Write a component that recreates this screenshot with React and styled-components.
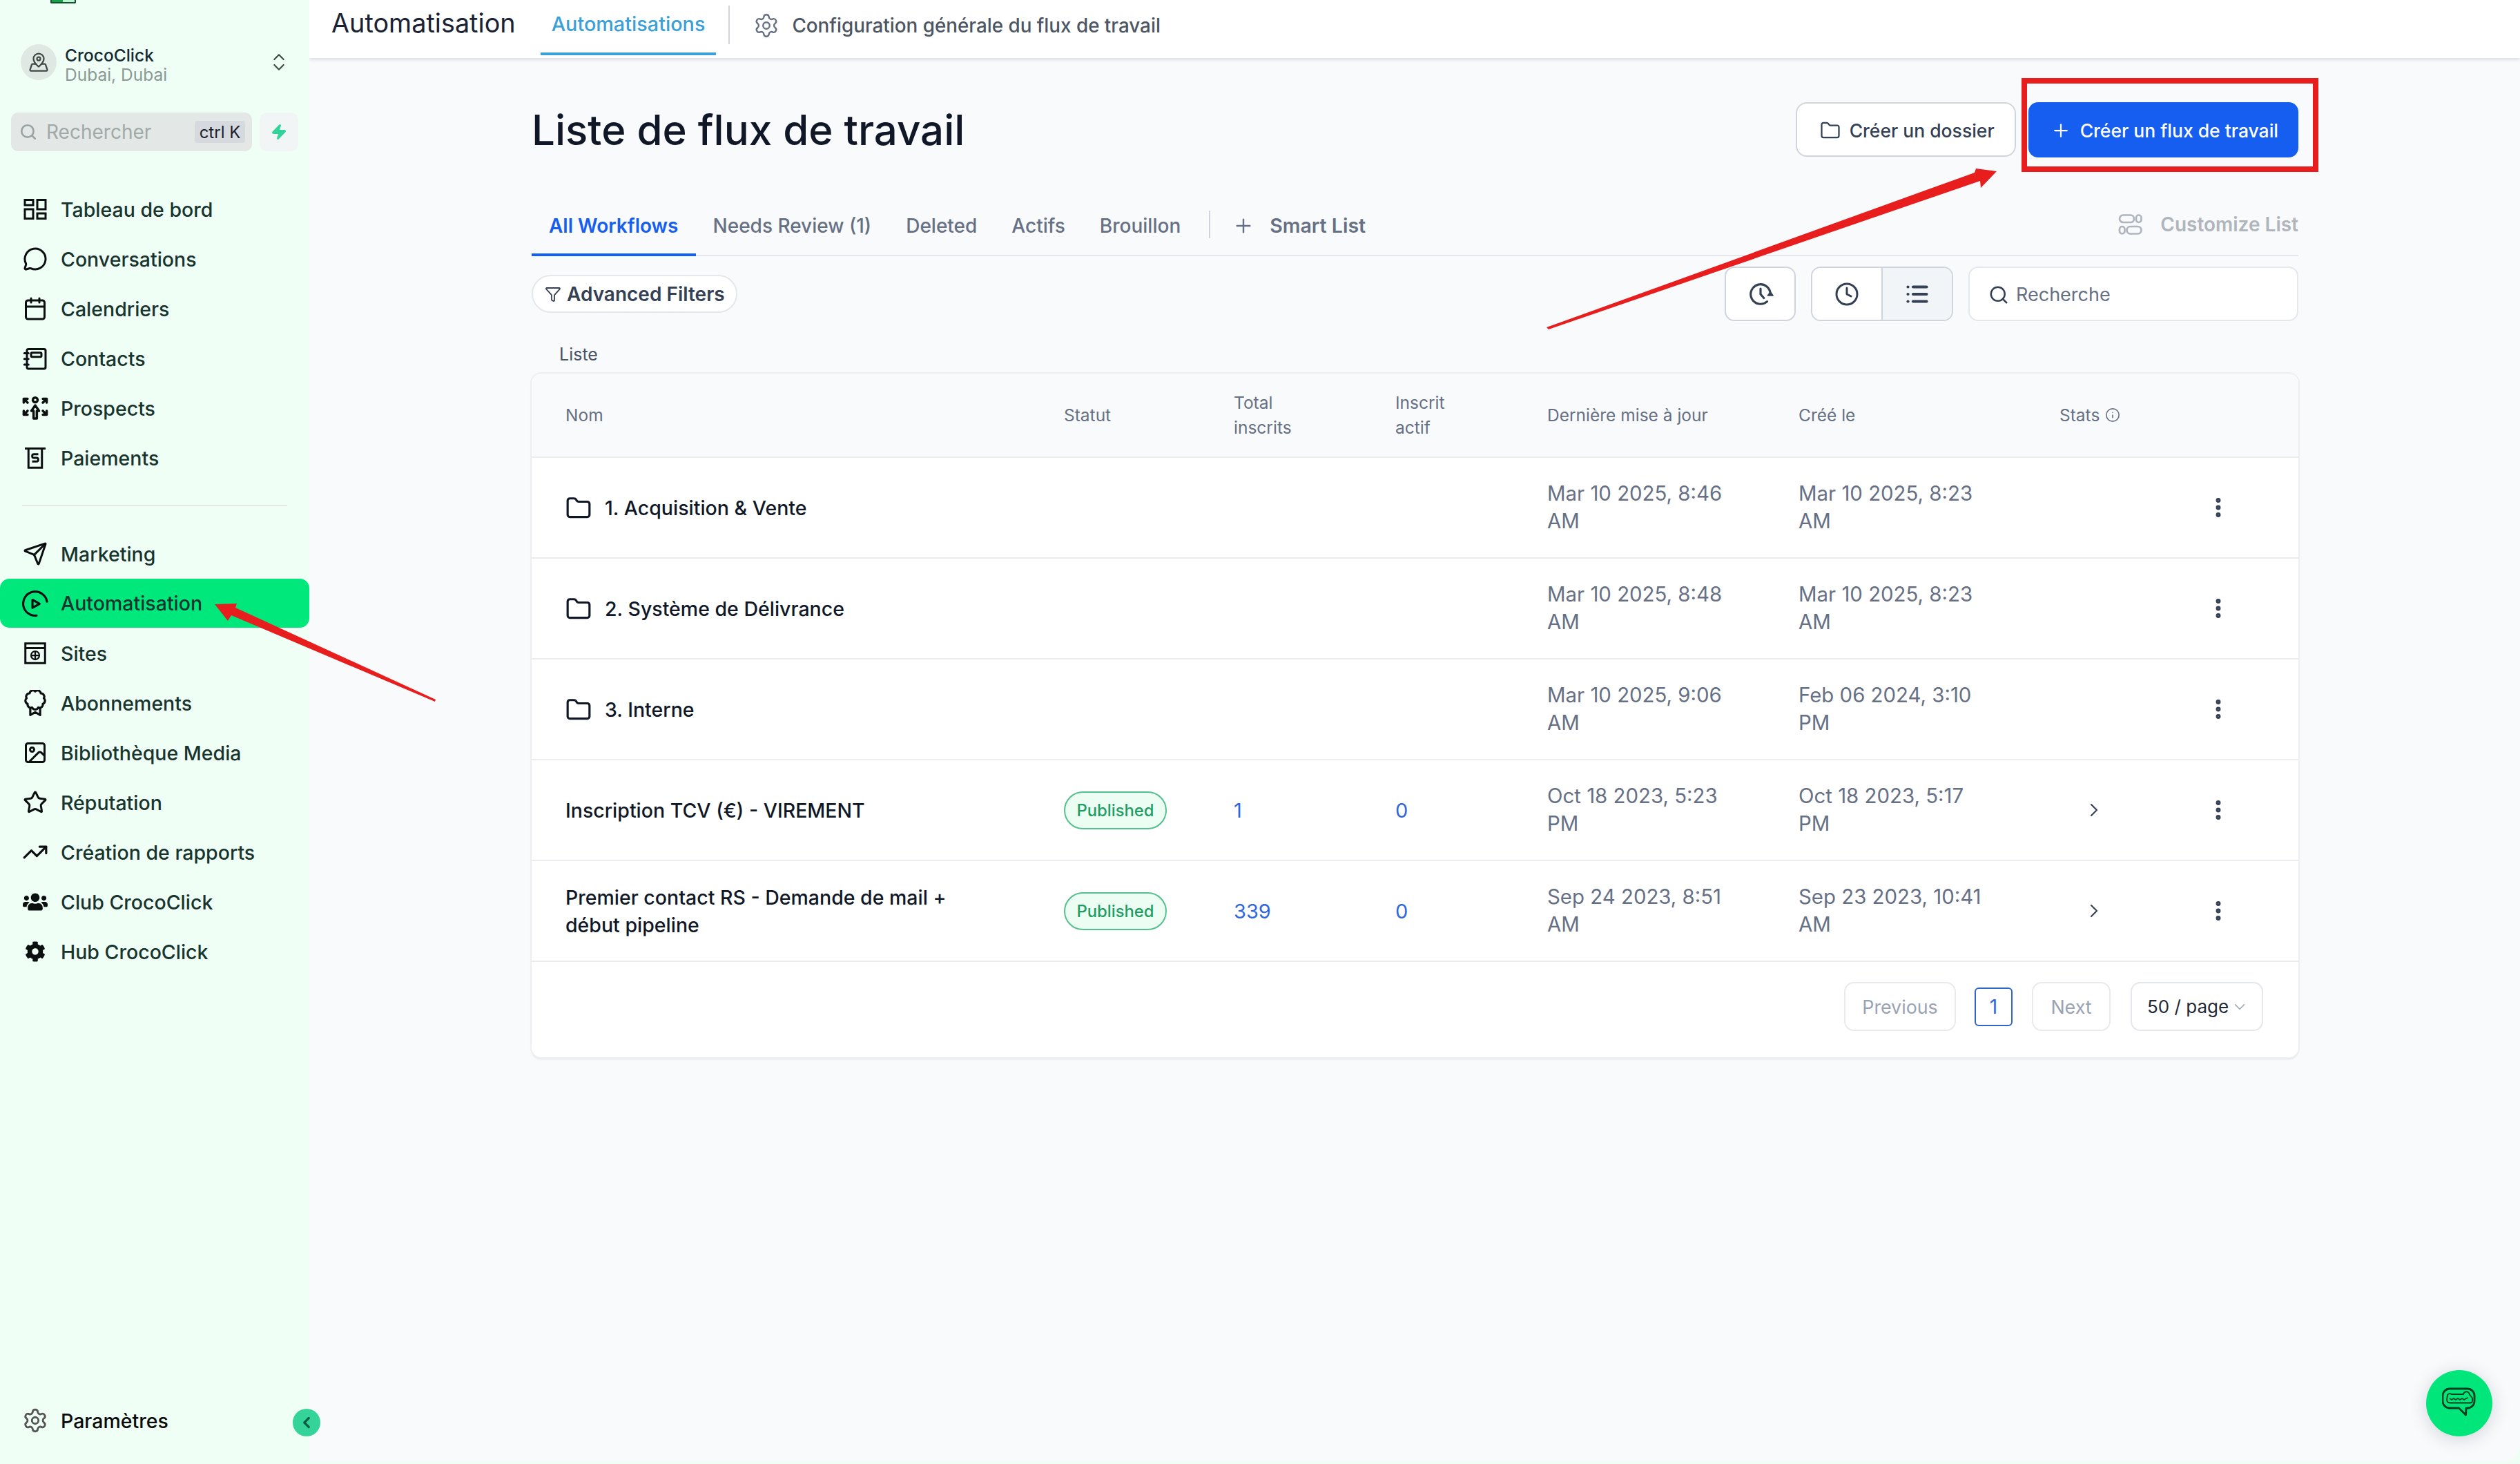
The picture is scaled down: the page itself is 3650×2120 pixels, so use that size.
import React from "react";
import styled, { createGlobalStyle } from "styled-components";
import {
  Calendar,
  ChevronDown,
  ChevronLeft,
  ChevronRight,
  ChevronsUpDown,
  Clock,
  EllipsisVertical,
  Filter,
  Folder,
  Image,
  Info,
  List,
  MapPinned,
  MessageCircle,
  Plus,
  Search,
  Send,
  Settings,
  Star,
  TrendingUp,
  Zap,
} from "lucide-react";
import { FaCog, FaUsers } from "react-icons/fa";

const GlobalStyle = createGlobalStyle`
  html, body {
    margin: 0;
    padding: 0;
    background: #f0fff6;
    font-family: Inter, "Liberation Sans", sans-serif;
  }
  * {
    box-sizing: border-box;
  }
`;

const Shell = styled.div`
  position: relative;
  display: flex;
  width: 3650px;
  height: 2120px;
  overflow: hidden;
  background: #f0fff6;
`;

const Sidebar = styled.aside`
  position: relative;
  display: flex;
  flex-direction: column;
  width: 448px;
  flex-shrink: 0;
  height: 2117px;
  background: #f0fff6;
  border-bottom-left-radius: 20px;
`;

const LogoSliver = styled.div`
  display: flex;
  width: 37px;
  height: 5px;
  margin-left: 73px;
  border: 2px solid #14532d;
  border-top: 0;
  border-radius: 0 0 2px 2px;
  background: linear-gradient(90deg, #16a34a 50%, #bbf7d0 50%);
`;

const Location = styled.div`
  display: flex;
  align-items: center;
  height: 52px;
  margin: 59px 28px 0 30px;
`;

const Avatar = styled.div`
  display: flex;
  align-items: center;
  justify-content: center;
  width: 52px;
  height: 52px;
  border-radius: 50%;
  background: #dfe8e3;
  color: #3f4a47;
`;

const LocationText = styled.div`
  flex: 1;
  margin: 8px 0 0 12px;
  font-size: 24.5px;
  line-height: 28px;
`;

const LocationName = styled.div`
  color: #142a33;
  font-weight: 500;
`;

const LocationSub = styled.div`
  color: #8b9895;
`;

const SearchRow = styled.div`
  display: flex;
  gap: 11px;
  margin: 47px 16px 0;
`;

const SideSearch = styled.div`
  display: flex;
  align-items: center;
  width: 349px;
  height: 56px;
  padding: 0 10px 0 12px;
  border-radius: 10px;
  background: #e3e7e6;
  color: #a1aaa9;
  font-size: 28px;
`;

const SideSearchLabel = styled.span`
  flex: 1;
  margin-left: 13px;
`;

const Kbd = styled.span`
  display: flex;
  align-items: center;
  justify-content: center;
  width: 73px;
  height: 32px;
  border-radius: 4px;
  background: #d6dadf;
  color: #1a1f2b;
  font-size: 24px;
`;

const BoltButton = styled.div`
  display: flex;
  align-items: center;
  justify-content: center;
  width: 56px;
  height: 56px;
  border-radius: 10px;
  background: #f1f5f6;
  color: #34d399;
`;

const Nav = styled.nav`
  display: flex;
  flex-direction: column;
  margin-top: ${(p) => p.$top}px;
`;

const NavItem = styled.div`
  display: flex;
  align-items: center;
  height: ${(p) => (p.$active ? "71px" : "72px")};
  margin-bottom: ${(p) => (p.$active ? "1px" : "0")};
  padding-left: 32px;
  border-radius: 14px;
  background: ${(p) => (p.$active ? "#00e87c" : "transparent")};
  color: #17342e;
  font-size: 28.5px;
  font-weight: 500;
`;

const NavIcon = styled.span`
  display: flex;
  align-items: center;
  justify-content: center;
  width: 38px;
  height: 38px;
  margin-right: 18px;
  color: #0b0f10;
`;

const NavDivider = styled.div`
  height: 2px;
  margin: 32px 32px 0;
  background: #e4e9e8;
`;

const SettingsRow = styled.div`
  display: flex;
  align-items: center;
  height: 60px;
  margin-top: auto;
  margin-bottom: 30px;
  padding-left: 32px;
  color: #0a0c0c;
  font-size: 28.5px;
  font-weight: 500;
`;

const SettingsIcon = styled.span`
  display: flex;
  width: 38px;
  margin-right: 18px;
  color: #555;
`;

const CollapseButton = styled.div`
  position: absolute;
  left: 424px;
  bottom: 37px;
  display: flex;
  align-items: center;
  justify-content: center;
  width: 40px;
  height: 40px;
  border-radius: 50%;
  background: #34d399;
  color: #065f46;
`;

const Main = styled.main`
  display: flex;
  flex: 1;
  flex-direction: column;
  height: 2116px;
  background: #f8fafc;
  border-bottom-right-radius: 24px;
`;

const Header = styled.header`
  display: flex;
  align-items: flex-start;
  height: 84px;
  padding-left: 32px;
  background: #fff;
  box-shadow: 0 2px 6px rgba(16, 24, 40, 0.14);
`;

const AppTitle = styled.div`
  margin-top: 11px;
  color: #1a2233;
  font-size: 37.8px;
  line-height: 44px;
`;

const HeaderTab = styled.div`
  height: 80px;
  margin-left: 36px;
  padding: 13px 16px 0;
  border-bottom: 4px solid #3b9fd8;
  color: #3b9fd8;
  font-size: 28.8px;
  font-weight: 500;
  line-height: 44px;
`;

const HeaderDivider = styled.div`
  width: 2px;
  height: 56px;
  margin: 8px 34px 0 18px;
  background: #cfd4da;
`;

const HeaderLink = styled.div`
  display: flex;
  align-items: center;
  gap: 18px;
  height: 74px;
  color: #4b5563;
  font-size: 27.8px;
  font-weight: 500;
`;

const Content = styled.div`
  display: flex;
  flex-direction: column;
  padding: 64px 321px 0 322px;
`;

const TitleRow = styled.div`
  display: flex;
  align-items: center;
  justify-content: space-between;
  height: 80px;
`;

const Title = styled.h1`
  margin: 0;
  color: #101828;
  font-size: 60px;
  font-weight: 500;
`;

const TitleActions = styled.div`
  display: flex;
  gap: 18px;
`;

const OutlineButton = styled.div`
  display: flex;
  align-items: center;
  gap: 13px;
  height: 79px;
  padding: 2px 29px 0 33px;
  border: 2px solid #d0d5dd;
  border-radius: 16px;
  background: #fff;
  color: #344054;
  font-size: 26.5px;
  font-weight: 500;
`;

const PrimaryButton = styled.div`
  display: flex;
  align-items: center;
  gap: 13px;
  height: 80px;
  padding: 2px 29px 0 32px;
  border-radius: 14px;
  background: #155eef;
  color: #fff;
  font-size: 26.5px;
  font-weight: 500;
`;

const TabsBar = styled.div`
  display: flex;
  align-items: stretch;
  height: 81px;
  margin-top: 62px;
  border-bottom: 2px solid #e4e7ec;
`;

const Tab = styled.div`
  display: flex;
  align-items: center;
  padding: 0 25px 4px;
  margin-bottom: -2px;
  border-bottom: 4px solid ${(p) => (p.$active ? "#155eef" : "transparent")};
  color: ${(p) => (p.$active ? "#155eef" : "#667085")};
  font-size: 28px;
  font-weight: ${(p) => (p.$active ? 600 : 500)};
`;

const TabDivider = styled.div`
  width: 2px;
  height: 40px;
  margin: 15px 32px 0 16px;
  background: #d0d5dd;
`;

const SmartList = styled.div`
  display: flex;
  align-items: center;
  gap: 22px;
  height: 73px;
  color: #667085;
  font-size: 28.5px;
  font-weight: 600;
`;

const CustomizeList = styled.div`
  display: flex;
  align-items: center;
  gap: 26px;
  height: 70px;
  margin-left: auto;
  color: #b0b5bd;
  font-size: 28px;
  font-weight: 600;
`;

const Toolbar = styled.div`
  display: flex;
  align-items: center;
  height: 79px;
  margin-top: 15px;
`;

const FilterPill = styled.div`
  display: flex;
  align-items: center;
  gap: 8px;
  height: 55px;
  padding: 0 16px 0 17px;
  border: 2px solid #e4e7ec;
  border-radius: 28px;
  background: #fff;
  color: #344054;
  font-size: 28px;
  font-weight: 600;
`;

const IconButton = styled.div`
  display: flex;
  align-items: center;
  justify-content: center;
  width: 103px;
  height: 79px;
  margin-left: auto;
  border: 2px solid #d0d5dd;
  border-radius: 14px;
  background: #fff;
  color: #344054;
`;

const Segmented = styled.div`
  display: flex;
  width: 206px;
  height: 79px;
  margin-left: 22px;
  overflow: hidden;
  border: 2px solid #d0d5dd;
  border-radius: 14px;
  background: #fff;
  color: #344054;
`;

const Segment = styled.div`
  display: flex;
  flex: 1;
  align-items: center;
  justify-content: center;
  background: ${(p) => (p.$on ? "#f2f5f8" : "#fff")};
  border-left: ${(p) => (p.$on ? "2px solid #d0d5dd" : "0")};
`;

const TableSearch = styled.div`
  display: flex;
  align-items: center;
  gap: 10px;
  width: 478px;
  height: 79px;
  margin-left: 22px;
  padding: 2px 0 0 27px;
  border: 2px solid #e4e7ec;
  border-radius: 14px;
  background: #fff;
  color: #667085;
  font-size: 27px;
`;

const ListLabel = styled.div`
  margin: 30px 0 10px 40px;
  color: #475467;
  font-size: 25px;
  line-height: 36px;
`;

const Card = styled.div`
  display: flex;
  flex-direction: column;
  height: 990px;
  border-radius: 14px;
  background: #fff;
  box-shadow: 0 0 0 2px #eceef1, 0 3px 3px rgba(16, 24, 40, 0.1);
`;

const Row = styled.div`
  display: grid;
  grid-template-columns: 771px 246px 234px 220px 364px 378px 212px 1fr;
  align-items: center;
  height: ${(p) => (p.$head ? "122px" : "146px")};
  border-bottom: 2px solid #eaecf0;
  background: ${(p) => (p.$head ? "#f8fafc" : "#fff")};
  border-radius: ${(p) => (p.$head ? "14px 14px 0 0" : "0")};
`;

const HeadCell = styled.div`
  padding-left: ${(p) => (p.$first ? "49px" : "0")};
  color: #667085;
  font-size: 24.5px;
  line-height: 36px;
`;

const StatsHead = styled(HeadCell)`
  display: flex;
  align-items: center;
  gap: 8px;
`;

const NameCell = styled.div`
  display: flex;
  align-items: center;
  gap: 19px;
  padding: 2px 0 0 49px;
  max-width: 620px;
  color: #101828;
  font-size: 28.5px;
  font-weight: 500;
  line-height: 40px;
`;

const Badge = styled.span`
  display: inline-flex;
  align-items: center;
  justify-content: center;
  width: 149px;
  height: 55px;
  border: 2px solid #55c08d;
  border-radius: 28px;
  background: #ecfdf3;
  color: #1f9d62;
  font-size: 23.8px;
  font-weight: 500;
`;

const CountCell = styled.div`
  color: #2f66dd;
  font-size: 29px;
`;

const DateCell = styled.div`
  max-width: 290px;
  color: #667085;
  font-size: 29.4px;
  line-height: 40px;
`;

const StatsCell = styled.div`
  display: flex;
  padding-left: 34px;
  color: #344054;
`;

const MenuCell = styled.div`
  display: flex;
  color: #344054;
`;

const Pagination = styled.div`
  display: flex;
  align-items: flex-start;
  justify-content: flex-end;
  padding: 29px 51px 0 0;
`;

const PageButton = styled.div`
  display: flex;
  align-items: center;
  justify-content: center;
  width: ${(p) => p.$w}px;
  height: 71px;
  margin-right: ${(p) => p.$gap}px;
  border: 2px solid #e8eaee;
  border-radius: 14px;
  background: #fff;
  color: #98a2b3;
  font-size: 26.8px;
`;

const PageCurrent = styled.div`
  display: flex;
  align-items: center;
  justify-content: center;
  width: 55px;
  height: 56px;
  margin: 8px 28px 0 0;
  border: 2px solid #2f66c9;
  border-radius: 6px;
  color: #2f66dd;
  font-size: 28px;
`;

const PageSize = styled.div`
  display: flex;
  align-items: center;
  gap: 3px;
  width: 192px;
  height: 71px;
  padding-left: 22px;
  border: 2px solid #e4e7ec;
  border-radius: 14px;
  background: #fff;
  color: #1f2937;
  font-size: 26px;
`;

const ChatBubble = styled.div`
  position: absolute;
  left: 3514px;
  top: 1984px;
  display: flex;
  align-items: center;
  justify-content: center;
  width: 96px;
  height: 96px;
  border-radius: 50%;
  background: #00e67a;
  box-shadow: 0 4px 26px rgba(16, 24, 40, 0.16);
`;

const Annotations = styled.svg`
  position: absolute;
  left: 0;
  top: 0;
  pointer-events: none;
`;

const SvgIcon = ({ size = 36, children, ...rest }) => (
  <svg
    width={size}
    height={size}
    viewBox="0 0 24 24"
    fill="none"
    stroke="currentColor"
    strokeWidth="2"
    strokeLinecap="round"
    strokeLinejoin="round"
    {...rest}
  >
    {children}
  </svg>
);

const DashboardIcon = () => (
  <SvgIcon strokeLinecap="butt" strokeLinejoin="miter">
    <rect x="2" y="3" width="8" height="5" />
    <rect x="14" y="3" width="8" height="9" />
    <rect x="2" y="12" width="8" height="9" />
    <rect x="14" y="16" width="8" height="5" />
  </SvgIcon>
);

const ContactsIcon = () => (
  <SvgIcon>
    <rect x="4" y="3" width="18" height="19" rx="1.5" />
    <rect x="8" y="6.5" width="10" height="4" rx="1" />
    <path d="M1.5 7h4M1.5 12.5h4M1.5 18h4" />
  </SvgIcon>
);

const ProspectsIcon = () => (
  <SvgIcon size={38} strokeWidth="2.2">
    <circle cx="12" cy="4.5" r="2.2" />
    <path d="M8.5 14.5l3.5-5 3.5 5h-2v7h-3v-7z" />
    <path d="M1.5 7V3.5H5M1.5 3.5l3.5 3.5M22.5 7V3.5H19M22.5 3.5L19 7M1.5 14.5V18H5M1.5 18L5 14.5M22.5 14.5V18H19M22.5 18L19 14.5" />
  </SvgIcon>
);

const PaymentsIcon = () => (
  <SvgIcon strokeLinecap="butt" strokeLinejoin="miter">
    <path d="M2 3h20M5.5 3v18.5h13V3" />
    <path
      d="M15 8.5h-4.2a1.7 1.7 0 0 0 0 3.5h2.4a1.7 1.7 0 0 1 0 3.5H9"
      strokeWidth="1.9"
    />
  </SvgIcon>
);

const AutomationIcon = () => (
  <SvgIcon size={38}>
    <path d="M22.8 10.2A11 11 0 1 0 13.2 23" />
    <path d="M9.5 8.5l6.5 3.7-6.5 3.7z" />
  </SvgIcon>
);

const SitesIcon = () => (
  <SvgIcon strokeLinecap="butt" strokeLinejoin="miter">
    <rect x="2.5" y="2.5" width="19" height="19" />
    <path d="M2.5 7h19" />
    <circle cx="12" cy="14" r="4" strokeWidth="1.5" />
    <path d="M8 14h8M12 10v8" strokeWidth="1.5" />
  </SvgIcon>
);

// scalloped outline of the subscription rosette, one arc per lobe
const rosette = (() => {
  const lobes = 9;
  const pts = Array.from({ length: lobes }, (_, i) => {
    const a = (i / lobes) * Math.PI * 2 - Math.PI / 2;
    return [12 + 8 * Math.cos(a), 9 + 7.6 * Math.sin(a)];
  });
  const [first] = pts;
  const arcs = pts
    .slice(1)
    .concat([first])
    .map(([x, y]) => `A3 3 0 0 1 ${x.toFixed(2)} ${y.toFixed(2)}`)
    .join(" ");
  return `M${first[0].toFixed(2)} ${first[1].toFixed(2)} ${arcs}Z`;
})();

const BadgeIcon = () => (
  <SvgIcon size={38}>
    <path d={rosette} />
    <path d="M7.5 17.5V23l4.5-2.5L16.5 23v-5.5" />
  </SvgIcon>
);

const LocationIcon = () => <MapPinned size={30} strokeWidth={1.8} />;

const CustomizeIcon = () => (
  <SvgIcon size={36} strokeWidth="1.8">
    <rect x="2" y="3" width="14" height="7" rx="3.5" />
    <rect x="18" y="3" width="5" height="7" rx="2.5" />
    <rect x="2" y="14" width="5" height="7" rx="2.5" />
    <rect x="9" y="14" width="14" height="7" rx="3.5" />
  </SvgIcon>
);

const ClockArrowIcon = () => (
  <SvgIcon size={38}>
    <path d="M21 12a9 9 0 1 0-3 6.7" />
    <path d="M18.6 13.2L21 10l2.4 3.2z" fill="currentColor" strokeWidth="1" />
    <path d="M12 7v5l3 3.5" />
  </SvgIcon>
);

const CrocIcon = () => (
  <svg width="50" height="50" viewBox="0 0 50 50" fill="none" stroke="#073d1f" strokeWidth="2.4" strokeLinejoin="round">
    <path d="M11 4h26a10 10 0 0 1 10 10v8a10 10 0 0 1-10 10h-2l-.5 10-10-10H11A10 10 0 0 1 1 22v-8A10 10 0 0 1 11 4z" strokeWidth="2.8" />
    <path d="M8 13a4 4 0 0 1 6 -1h17c.5-3 3-4 6-3.5 2 .5 2.5 2 3 4l4 5v4c0 2-1 3-3 3H12c-3 0-5-2-5-5z" strokeWidth="1.8" />
    <path d="M11 18l3 2 3-2 3 2 3-2 3 2 3-2 3 2 3-2 3-1" strokeWidth="1.6" />
  </svg>
);

const topItems = [
  { label: "Tableau de bord", icon: <DashboardIcon /> },
  { label: "Conversations", icon: <MessageCircle size={36} /> },
  { label: "Calendriers", icon: <Calendar size={36} /> },
  { label: "Contacts", icon: <ContactsIcon /> },
  { label: "Prospects", icon: <ProspectsIcon /> },
  { label: "Paiements", icon: <PaymentsIcon /> },
];

const bottomItems = [
  { label: "Marketing", icon: <Send size={36} /> },
  { label: "Automatisation", icon: <AutomationIcon />, active: true },
  { label: "Sites", icon: <SitesIcon /> },
  { label: "Abonnements", icon: <BadgeIcon /> },
  { label: "Bibliothèque Media", icon: <Image size={36} /> },
  { label: "Réputation", icon: <Star size={36} /> },
  { label: "Création de rapports", icon: <TrendingUp size={38} /> },
  { label: "Club CrocoClick", icon: <FaUsers size={36} /> },
  { label: "Hub CrocoClick", icon: <FaCog size={30} /> },
];

const tabs = ["Needs Review (1)", "Deleted", "Actifs", "Brouillon"];

const rows = [
  { name: "1. Acquisition & Vente", folder: true, updated: "Mar 10 2025, 8:46 AM", created: "Mar 10 2025, 8:23 AM" },
  { name: "2. Système de Délivrance", folder: true, updated: "Mar 10 2025, 8:48 AM", created: "Mar 10 2025, 8:23 AM" },
  { name: "3. Interne", folder: true, updated: "Mar 10 2025, 9:06 AM", created: "Feb 06 2024, 3:10 PM" },
  { name: "Inscription TCV (€) - VIREMENT", status: "Published", total: "1", active: "0", updated: "Oct 18 2023, 5:23 PM", created: "Oct 18 2023, 5:17 PM" },
  { name: "Premier contact RS - Demande de mail + début pipeline", status: "Published", total: "339", active: "0", updated: "Sep 24 2023, 8:51 AM", created: "Sep 23 2023, 10:41 AM" },
];

const NavList = ({ items, top }) => (
  <Nav $top={top}>
    {items.map((item) => (
      <NavItem key={item.label} $active={item.active}>
        <NavIcon>{item.icon}</NavIcon>
        {item.label}
      </NavItem>
    ))}
  </Nav>
);

export default function App() {
  return (
    <Shell>
      <GlobalStyle />
      <Sidebar>
        <LogoSliver />
        <Location>
          <Avatar>
            <LocationIcon />
          </Avatar>
          <LocationText>
            <LocationName>CrocoClick</LocationName>
            <LocationSub>Dubai, Dubai</LocationSub>
          </LocationText>
          <ChevronsUpDown size={32} strokeWidth={1.6} color="#3f4a47" />
        </Location>
        <SearchRow>
          <SideSearch>
            <Search size={26} strokeWidth={2.4} color="#9aa3a3" />
            <SideSearchLabel>Rechercher</SideSearchLabel>
            <Kbd>ctrl K</Kbd>
          </SideSearch>
          <BoltButton>
            <Zap size={24} fill="currentColor" />
          </BoltButton>
        </SearchRow>
        <NavList items={topItems} top={48} />
        <NavDivider />
        <NavList items={bottomItems} top={33} />
        <SettingsRow>
          <SettingsIcon>
            <Settings size={38} strokeWidth={1.8} />
          </SettingsIcon>
          Paramètres
        </SettingsRow>
        <CollapseButton>
          <ChevronLeft size={26} strokeWidth={3} />
        </CollapseButton>
      </Sidebar>

      <Main>
        <Header>
          <AppTitle>Automatisation</AppTitle>
          <HeaderTab>Automatisations</HeaderTab>
          <HeaderDivider />
          <HeaderLink>
            <Settings size={38} strokeWidth={1.5} color="#667085" />
            Configuration générale du flux de travail
          </HeaderLink>
        </Header>

        <Content>
          <TitleRow>
            <Title>Liste de flux de travail</Title>
            <TitleActions>
              <OutlineButton>
                <Folder size={30} strokeWidth={1.8} />
                Créer un dossier
              </OutlineButton>
              <PrimaryButton>
                <Plus size={30} strokeWidth={1.8} />
                Créer un flux de travail
              </PrimaryButton>
            </TitleActions>
          </TitleRow>

          <TabsBar>
            <Tab $active>All Workflows</Tab>
            {tabs.map((tab) => (
              <Tab key={tab}>{tab}</Tab>
            ))}
            <TabDivider />
            <SmartList>
              <Plus size={32} strokeWidth={1.8} />
              Smart List
            </SmartList>
            <CustomizeList>
              <CustomizeIcon />
              Customize List
            </CustomizeList>
          </TabsBar>

          <Toolbar>
            <FilterPill>
              <Filter size={24} strokeWidth={1.8} />
              Advanced Filters
            </FilterPill>
            <IconButton>
              <ClockArrowIcon />
            </IconButton>
            <Segmented>
              <Segment>
                <Clock size={36} strokeWidth={2} />
              </Segment>
              <Segment $on>
                <List size={36} strokeWidth={2.8} />
              </Segment>
            </Segmented>
            <TableSearch>
              <Search size={30} strokeWidth={2} color="#344054" />
              Recherche
            </TableSearch>
          </Toolbar>

          <ListLabel>Liste</ListLabel>

          <Card>
            <Row $head>
              <HeadCell $first>Nom</HeadCell>
              <HeadCell>Statut</HeadCell>
              <HeadCell>
                Total
                <br />
                inscrits
              </HeadCell>
              <HeadCell>
                Inscrit
                <br />
                actif
              </HeadCell>
              <HeadCell>Dernière mise à jour</HeadCell>
              <HeadCell>Créé le</HeadCell>
              <StatsHead>
                Stats <Info size={22} strokeWidth={1.8} />
              </StatsHead>
              <div />
            </Row>
            {rows.map((row) => (
              <Row key={row.name}>
                <NameCell>
                  {row.folder && <Folder size={38} strokeWidth={2} />}
                  <span>{row.name}</span>
                </NameCell>
                <div>{row.status && <Badge>{row.status}</Badge>}</div>
                <CountCell>{row.total}</CountCell>
                <CountCell>{row.active}</CountCell>
                <DateCell>{row.updated}</DateCell>
                <DateCell>{row.created}</DateCell>
                <StatsCell>{row.status && <ChevronRight size={32} strokeWidth={1.6} />}</StatsCell>
                <MenuCell>
                  <EllipsisVertical size={36} strokeWidth={2.6} />
                </MenuCell>
              </Row>
            ))}
            <Pagination>
              <PageButton $w={162} $gap={27}>Previous</PageButton>
              <PageCurrent>1</PageCurrent>
              <PageButton $w={114} $gap={29}>Next</PageButton>
              <PageSize>
                50 / page
                <ChevronDown size={26} strokeWidth={1.4} color="#98a2b3" />
              </PageSize>
            </Pagination>
          </Card>
        </Content>
      </Main>

      <ChatBubble>
        <CrocIcon />
      </ChatBubble>

      <Annotations width="3650" height="2120" viewBox="0 0 3650 2120">
        <rect x="2932" y="117" width="422" height="128" fill="none" stroke="#e81e1e" strokeWidth="8" />
        <polygon fill="#e81e1e" points="2240,474 2860,250 2862,244 2892,248 2869,272 2868,262 2243,477" />
        <polygon fill="#e81e1e" points="311,875 343,874 341,880 631,1013 630,1016 335,891 330,899" />
      </Annotations>
    </Shell>
  );
}
